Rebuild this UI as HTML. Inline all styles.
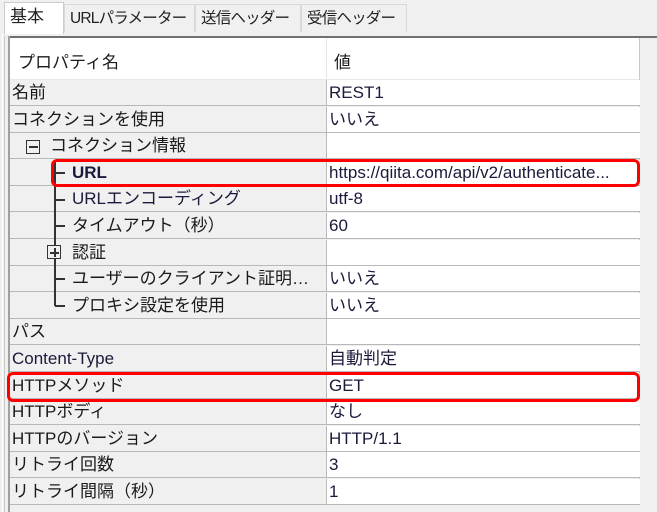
<!DOCTYPE html>
<html><head><meta charset="utf-8"><style>
*{margin:0;padding:0;box-sizing:border-box}
body{width:657px;height:512px;overflow:hidden;background:#f0f0f0;position:relative;font-family:"Liberation Sans","Noto Sans CJK JP",sans-serif;font-size:17px;color:#1a1a1a}
.a{position:absolute}
.tab{position:absolute;top:4px;height:28px;background:#f0f0f0;border:1px solid #d9d9d9;border-bottom:none;line-height:28px;padding-left:5px;font-size:15.5px;letter-spacing:-0.8px;color:#222;white-space:nowrap}
.row{position:absolute;left:10px;width:630px;height:26px;background:#b8b8b8}
.l{position:absolute;left:0;top:0;width:316px;height:25px;background:#f0f0f0;line-height:26px;padding-left:2px;white-space:nowrap;overflow:hidden}
.v{position:absolute;left:317px;top:0;width:313px;height:25px;background:#fff;line-height:26px;padding-left:2px;color:#1a1a3a;white-space:nowrap}
.red{position:absolute;border:3px solid #f00;border-radius:6px}
.tk{position:absolute;background:#333}
.box{position:absolute;width:14px;height:14px;border:1.5px solid #333}
</style></head><body>
<div class="a" style="left:0;top:0;width:657px;height:36px;background:#f0f0f0"></div>
<div class="tab" style="left:4px;top:2px;width:60px;height:32px;background:#fff;border-color:#ccc;font-size:17px;letter-spacing:0">基本</div>
<div class="tab" style="left:64px;width:131px">URLパラメーター</div>
<div class="tab" style="left:195px;width:106px">送信ヘッダー</div>
<div class="tab" style="left:301px;width:106px">受信ヘッダー</div>
<div class="a" style="left:2px;top:34px;width:1px;height:478px;background:#fff"></div>
<div class="a" style="left:8px;top:36px;width:649px;height:2px;background:#707070"></div>
<div class="a" style="left:8px;top:36px;width:2px;height:476px;background:#a0a0a0"></div>
<div class="a" style="left:4px;top:36px;width:1px;height:476px;background:#c8c8c8"></div>
<div class="a" style="left:10px;top:38px;width:630px;height:42px;background:#fff;border-bottom:1px solid #e8e8e8"></div>
<div class="a" style="left:326px;top:38px;width:1px;height:42px;background:#e6e6e6"></div>
<div class="a" style="left:639px;top:38px;width:1px;height:474px;background:#c8c8c8"></div>
<div class="a" style="left:18px;top:48px">プロパティ名</div>
<div class="a" style="left:334px;top:48px">値</div>

<div class="row" style="top:80px"><div class="l">名前</div><div class="v">REST1</div></div>
<div class="row" style="top:107px"><div class="l">コネクションを使用</div><div class="v">いいえ</div></div>
<div class="row" style="top:133px"><div class="l" style="padding-left:40px">コネクション情報</div><div class="v"></div></div>
<div class="row" style="top:160px"><div class="l" style="padding-left:62px;font-weight:bold;color:#1a1a3a">URL</div><div class="v">https://qiita.com/api/v2/authenticate...</div></div>
<div class="row" style="top:186px"><div class="l" style="padding-left:62px;color:#1a1a3a">URLエンコーディング</div><div class="v">utf-8</div></div>
<div class="row" style="top:213px"><div class="l" style="padding-left:62px">タイムアウト（秒）</div><div class="v">60</div></div>
<div class="row" style="top:240px"><div class="l" style="padding-left:62px">認証</div><div class="v"></div></div>
<div class="row" style="top:266px"><div class="l" style="padding-left:62px">ユーザーのクライアント証明…</div><div class="v">いいえ</div></div>
<div class="row" style="top:293px"><div class="l" style="padding-left:62px">プロキシ設定を使用</div><div class="v">いいえ</div></div>
<div class="row" style="top:319px"><div class="l">パス</div><div class="v"></div></div>
<div class="row" style="top:346px"><div class="l" style="color:#1a1a3a">Content-Type</div><div class="v">自動判定</div></div>
<div class="row" style="top:373px"><div class="l">HTTPメソッド</div><div class="v">GET</div></div>
<div class="row" style="top:399px"><div class="l">HTTPボディ</div><div class="v">なし</div></div>
<div class="row" style="top:426px"><div class="l">HTTPのバージョン</div><div class="v">HTTP/1.1</div></div>
<div class="row" style="top:452px"><div class="l">リトライ回数</div><div class="v">3</div></div>
<div class="row" style="top:479px"><div class="l">リトライ間隔（秒）</div><div class="v">1</div></div>
<div class="a" style="left:10px;top:505px;width:630px;height:7px;background:#f0f0f0"></div>

<!-- tree -->
<div class="box" style="left:26px;top:140px"></div><div class="tk" style="left:29px;top:146px;width:9px;height:2px"></div>
<div class="tk" style="left:54px;top:160px;width:2px;height:146px"></div>
<div class="tk" style="left:55px;top:172px;width:10px;height:2px"></div>
<div class="tk" style="left:55px;top:199px;width:10px;height:2px"></div>
<div class="tk" style="left:55px;top:225px;width:10px;height:2px"></div>
<div class="box" style="left:47px;top:245px;background:#f0f0f0"></div><div class="tk" style="left:50px;top:252px;width:9px;height:2px"></div><div class="tk" style="left:53.5px;top:248px;width:2px;height:9px"></div>
<div class="tk" style="left:55px;top:278px;width:10px;height:2px"></div>
<div class="tk" style="left:55px;top:305px;width:10px;height:2px"></div>

<div class="red" style="left:51px;top:159px;width:589px;height:28px"></div>
<div class="red" style="left:7px;top:372px;width:633px;height:30px"></div>
</body></html>
